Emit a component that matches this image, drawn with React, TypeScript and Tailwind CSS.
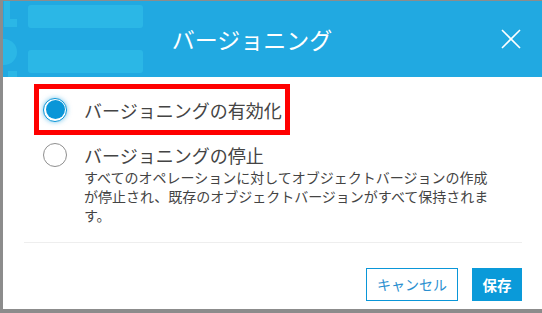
import React from "react";

const FONT = { fontFamily: '"Noto Sans CJK JP", "Noto Sans", sans-serif' };

function Radio({ checked }: { checked: boolean }) {
  return checked ? (
    <span className="w-[24px] h-[24px] shrink-0 rounded-full border-[1.5px] border-[#0a96d8] bg-white p-[1.5px] shadow-[0_0_5px_rgba(10,150,216,0.55)] flex">
      <span className="flex-1 rounded-full bg-[#0a96d8]" />
    </span>
  ) : (
    <span className="w-[24px] h-[24px] shrink-0 rounded-full border border-[#8f8f8f] bg-white" />
  );
}

export default function App() {
  return (
    <div className="w-[542px] h-[313px] bg-[#8c8c8c] pl-[3px] pt-[1px] pb-[4px]" style={FONT}>
      <div className="h-full bg-white flex flex-col">
        {/* header */}
        <div className="relative h-[76px] shrink-0 bg-[#21a9e1] flex items-center overflow-hidden">
          {/* faded page behind */}
          <div className="absolute left-[1px] top-0 w-[6px] h-[26px] bg-[#2bb7e6]" />
          <div className="absolute left-[1px] top-[18px] w-[13px] h-[8px] bg-[#2bb7e6]" />
          <div className="absolute left-[-12px] top-[38px] w-[26px] h-[26px] rounded-full bg-[#2bb7e6]" />
          <div className="absolute left-[5px] top-[70px] w-[9px] h-[8px] bg-[#2bb7e6]" />
          <div className="absolute left-[25px] top-[4px] w-[115px] h-[23px] rounded-[3px] bg-[#2bb7e6]" />
          <div className="absolute left-[25px] top-[49px] w-[115px] h-[23px] rounded-[3px] bg-[#2bb7e6]" />

          <div className="relative flex-1 text-center text-white text-[23px] leading-none">バージョニング</div>
          <svg className="relative mr-[21px]" width="20" height="20" viewBox="0 0 20 20" fill="none" stroke="white" strokeWidth="1.6">
            <path d="M1 1 19 19" />
            <path d="M19 1 1 19" />
          </svg>
        </div>

        {/* body */}
        <div className="flex-1 flex flex-col pl-[21px] pr-[20px]">
          <div className="pt-[7px] pl-[10px]">
            <div className="w-[256px] h-[51px] border-[5px] border-[#ff0000] pl-[4px] flex items-center gap-[17px]">
              <Radio checked />
              <span className="text-[18px] leading-[24px] text-[#444]">バージョニングの有効化</span>
            </div>

            <div className="mt-[8px] pl-[9px] flex gap-[17px]">
              <Radio checked={false} />
              <div className="flex flex-col">
                <span className="text-[18px] leading-[24px] text-[#444]">バージョニングの停止</span>
                <p className="w-[412px] text-[14px] leading-[19px] text-[#444] mt-px">
                  すべてのオペレーションに対してオブジェクトバージョンの作成が停止され、既存のオブジェクトバージョンがすべて保持されます。
                </p>
              </div>
            </div>
          </div>

          <div className="mt-[17px] h-px bg-[#eeeeee]" />

          <div className="mt-[25px] flex justify-end gap-[14px]">
            <button className="w-[92px] h-[33px] border border-[#0a96d8] bg-white text-[#2a8fd0] text-[14px]">
              キャンセル
            </button>
            <button className="w-[50px] h-[33px] bg-[#0a9ad9] text-white text-[14.5px] font-bold">
              保存
            </button>
          </div>
        </div>
      </div>
    </div>
  );
}
